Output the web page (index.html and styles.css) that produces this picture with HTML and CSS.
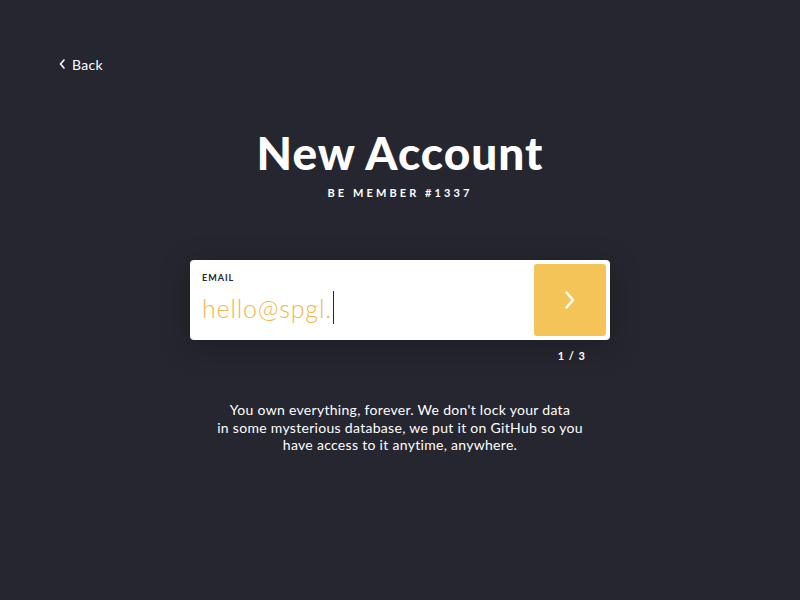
FILE: index.html
```html
<!DOCTYPE html>
<html lang="en">
<head>
  <meta charset="UTF-8" />
  <title>New Account</title>
  <link rel="stylesheet" href="styles.css">
</head>
<body>

  <a class="back" href="#">
    <svg width="6" height="10" viewBox="0 0 6 10"><path d="M5 1 L1.5 5 L5 9" fill="none" stroke="#fff" stroke-width="1.6" stroke-linecap="round" stroke-linejoin="round"/></svg>
    Back
  </a>

  <header class="head">
    <h1>New Account</h1>
    <p class="sub">BE MEMBER #1337</p>
  </header>

  <div class="form">
    <div class="field">
      <div class="input">
        <label>EMAIL</label>
        <div class="value">hello@spgl.<span class="caret"></span></div>
      </div>
      <button class="next">
        <svg width="12" height="20" viewBox="0 0 12 20"><path d="M2.5 2.5 L9 10 L2.5 17.5" fill="none" stroke="#fff" stroke-width="2.4" stroke-linecap="round" stroke-linejoin="round"/></svg>
      </button>
    </div>
    <div class="step">1 / 3</div>
  </div>

  <p class="note">
    You own everything, forever. We don't lock your data<br>
    in some mysterious database, we put it on GitHub so you<br>
    have access to it anytime, anywhere.
  </p>

</body>
</html>
```

FILE: styles.css
```css
body {
  margin: 0;
  min-height: 600px;
  background: #262630;
  color: #fff;
  font-family: Lato, "Open Sans", sans-serif;
  display: flex;
  flex-direction: column;
  align-items: center;
}

.back {
  align-self: flex-start;
  margin: 55px 0 0 59px;
  color: #fff;
  text-decoration: none;
  font-size: 14px;
  letter-spacing: 0.3px;
  display: flex;
  align-items: center;
  gap: 7px;
  height: 18px;
}

.head {
  margin-top: 52px;
  text-align: center;
}

h1 {
  margin: 0;
  font-size: 46px;
  font-weight: 900;
  line-height: 56px;
  letter-spacing: 1px;
}

.sub {
  margin: 5px 0 0;
  font-size: 11px;
  font-weight: 700;
  letter-spacing: 3.1px;
  line-height: 14px;
}

.form {
  margin-top: 60px;
  width: 420px;
}

.field {
  background: #fff;
  border-radius: 4px;
  height: 80px;
  padding: 4px;
  box-sizing: border-box;
  display: flex;
  box-shadow: 0 6px 30px rgba(0, 0, 0, 0.25);
}

.input {
  flex: 1;
  padding: 8px 0 0 8px;
}

.input label {
  display: block;
  color: #262630;
  font-size: 9px;
  font-weight: 700;
  letter-spacing: 1px;
  line-height: 12px;
}

.value {
  margin-top: 7px;
  color: #f0b64e;
  font-size: 25px;
  font-weight: 300;
  letter-spacing: 0.8px;
  line-height: 30px;
  display: flex;
  align-items: center;
}

.caret {
  display: inline-block;
  width: 1px;
  height: 33px;
  background: #262630;
  margin-left: 1px;
}

.next {
  width: 72px;
  height: 72px;
  border: none;
  border-radius: 3px;
  background: #f4c459;
  display: flex;
  align-items: center;
  justify-content: center;
  padding: 0;
}

.step {
  text-align: right;
  margin: 9px 24px 0 0;
  font-size: 11px;
  font-weight: 700;
  letter-spacing: 1px;
}

.note {
  margin: 39px 0 0;
  text-align: center;
  font-size: 14px;
  letter-spacing: 0.3px;
  line-height: 17.5px;
}
```
